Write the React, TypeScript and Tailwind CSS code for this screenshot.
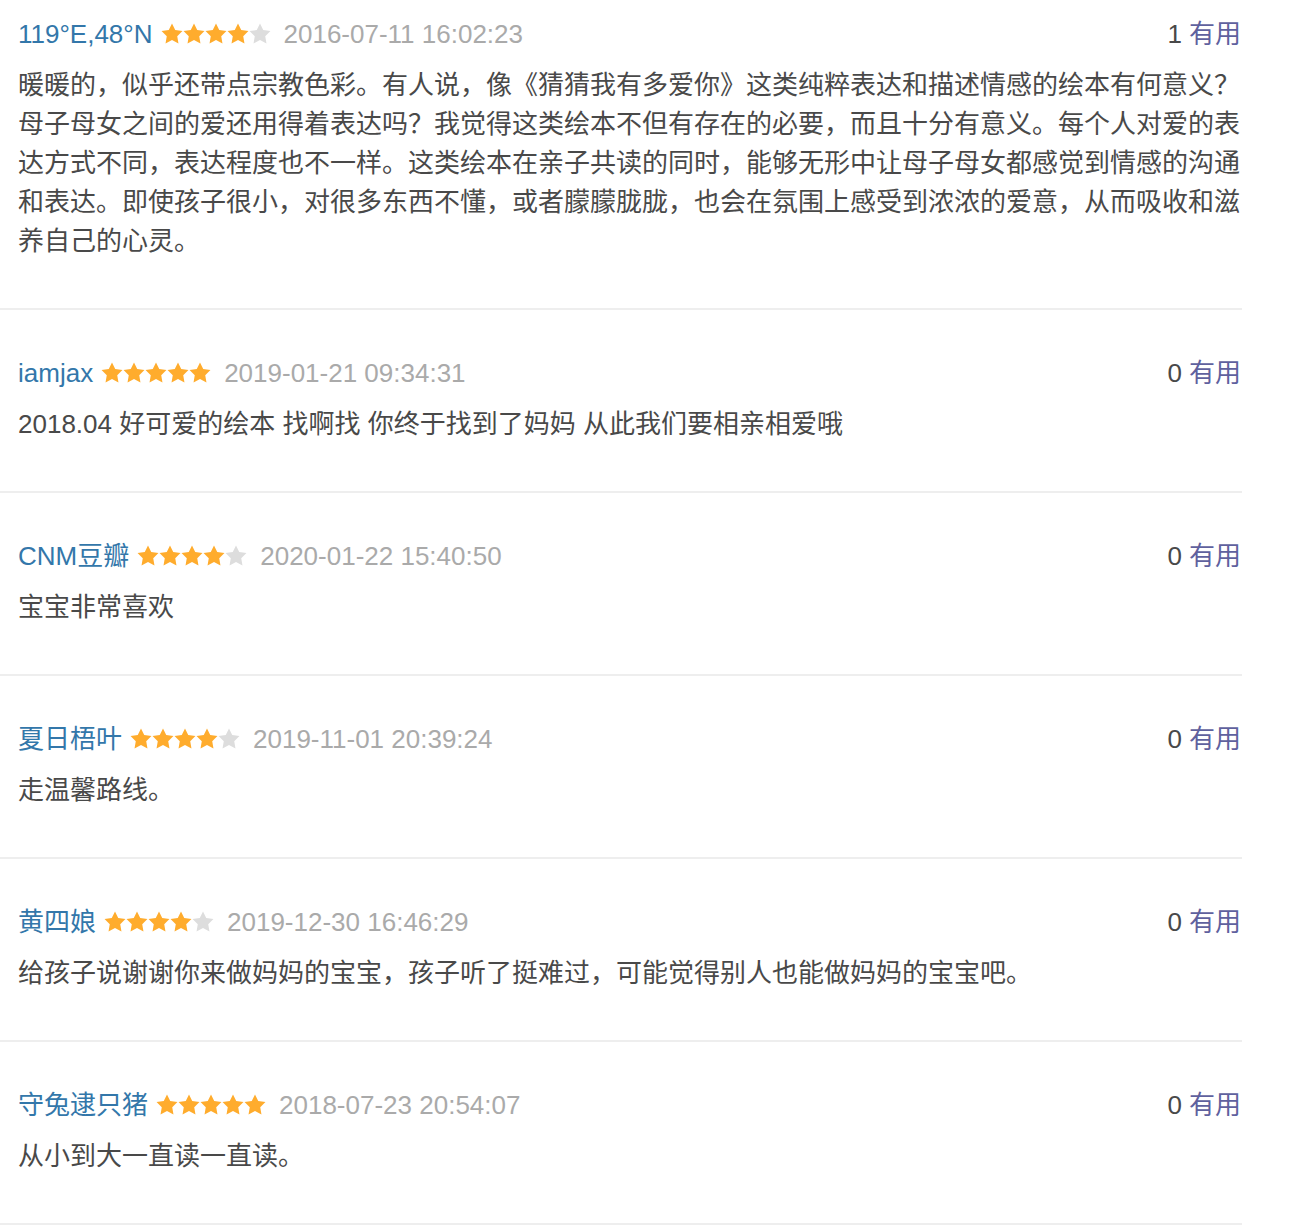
import React from "react";

type Review = {
  name: string;
  stars: number;
  date: string;
  useful: number;
  lines: string[];
};

const reviews: Review[] = [
  {
    name: "119°E,48°N",
    stars: 4,
    date: "2016-07-11 16:02:23",
    useful: 1,
    lines: [
      "暖暖的，似乎还带点宗教色彩。有人说，像《猜猜我有多爱你》这类纯粹表达和描述情感的绘本有何意义？",
      "母子母女之间的爱还用得着表达吗？我觉得这类绘本不但有存在的必要，而且十分有意义。每个人对爱的表",
      "达方式不同，表达程度也不一样。这类绘本在亲子共读的同时，能够无形中让母子母女都感觉到情感的沟通",
      "和表达。即使孩子很小，对很多东西不懂，或者朦朦胧胧，也会在氛围上感受到浓浓的爱意，从而吸收和滋",
      "养自己的心灵。",
    ],
  },
  {
    name: "iamjax",
    stars: 5,
    date: "2019-01-21 09:34:31",
    useful: 0,
    lines: ["2018.04 好可爱的绘本 找啊找 你终于找到了妈妈 从此我们要相亲相爱哦"],
  },
  {
    name: "CNM豆瓣",
    stars: 4,
    date: "2020-01-22 15:40:50",
    useful: 0,
    lines: ["宝宝非常喜欢"],
  },
  {
    name: "夏日梧叶",
    stars: 4,
    date: "2019-11-01 20:39:24",
    useful: 0,
    lines: ["走温馨路线。"],
  },
  {
    name: "黄四娘",
    stars: 4,
    date: "2019-12-30 16:46:29",
    useful: 0,
    lines: ["给孩子说谢谢你来做妈妈的宝宝，孩子听了挺难过，可能觉得别人也能做妈妈的宝宝吧。"],
  },
  {
    name: "守兔逮只猪",
    stars: 5,
    date: "2018-07-23 20:54:07",
    useful: 0,
    lines: ["从小到大一直读一直读。"],
  },
];

function Star({ on }: { on: boolean }) {
  return (
    <svg width="22" height="21" viewBox="1 1 22 21" className="shrink-0">
      <path
        d="M12 1.5L15.23 8.05L22.46 9.1L17.23 14.2L18.47 21.4L12 18L5.53 21.4L6.77 14.2L1.54 9.1L8.77 8.05Z"
        fill={on ? "#ffac2d" : "#dddddd"}
      />
    </svg>
  );
}

function Item({ r, first }: { r: Review; first: boolean }) {
  return (
    <div
      className={`w-[1242px] pl-[18px] pr-[1px] pb-[47px] border-b-2 border-[#eeeeee] ${
        first ? "pt-[15px]" : "pt-[44px]"
      }`}
    >
      <div className="flex items-center justify-between h-[39px] leading-[39px]">
        <div className="flex items-center">
          <span className="text-[#3377aa]">{r.name}</span>
          <span className="flex items-center ml-[8px] mb-[2px]">
            {[0, 1, 2, 3, 4].map((i) => (
              <Star key={i} on={i < r.stars} />
            ))}
          </span>
          <span className="ml-[13px] text-[#aaaaaa]">{r.date}</span>
        </div>
        <div className="flex items-center">
          <span className="text-[#494949]">{r.useful}</span>
          <span className="ml-[7px] text-[#5f619e]">有用</span>
        </div>
      </div>
      <div className="mt-[12px] text-[#494949] leading-[39px]">
        {r.lines.map((l, i) => (
          <div key={i} className="whitespace-nowrap">
            {l}
          </div>
        ))}
      </div>
    </div>
  );
}

export default function App() {
  return (
    <div
      className="bg-white min-h-[1226px] text-[26px]"
      style={{ fontFamily: '"Liberation Sans", Arial, "Noto Sans CJK SC", sans-serif' }}
    >
      {reviews.map((r, i) => (
        <Item key={i} r={r} first={i === 0} />
      ))}
    </div>
  );
}
